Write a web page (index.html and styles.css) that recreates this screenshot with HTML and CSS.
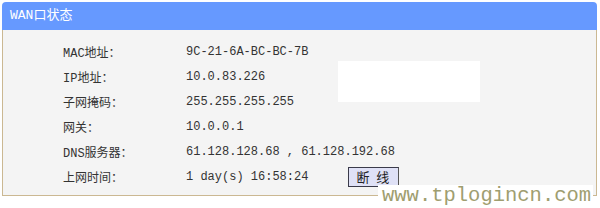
FILE: index.html
```html
<!DOCTYPE html>
<html>
<head>
<meta charset="utf-8">
<link rel="stylesheet" href="styles.css">
</head>
<body>
<div class="panel">
  <div class="panel-head">WAN口状态</div>
  <div class="panel-body">
    <div class="rows">
      <div class="label">MAC地址：</div><div class="value">9C-21-6A-BC-BC-7B</div>
      <div class="label">IP地址：</div><div class="value">10.0.83.226</div>
      <div class="label">子网掩码：</div><div class="value">255.255.255.255</div>
      <div class="label">网关：</div><div class="value">10.0.0.1</div>
      <div class="label">DNS服务器：</div><div class="value">61.128.128.68 , 61.128.192.68</div>
      <div class="label">上网时间：</div><div class="value">1 day(s) 16:58:24<button class="btn">断 线</button></div>
    </div>
    <div class="redact"></div>
  </div>
</div>
<div class="watermark">www.tplogincn.com</div>
</body>
</html>
```
FILE: styles.css
```css
html, body {
  margin: 0;
  padding: 0;
  background: #ffffff;
  width: 600px;
  height: 208px;
  overflow: hidden;
}
body {
  position: relative;
  font-family: "Liberation Mono", "Noto Sans CJK SC", monospace;
  font-size: 12px;
  color: #333333;
}
.panel {
  margin: 2px 3px 0 2px;
}
.panel-head {
  height: 28px;
  line-height: 28px;
  background: #6699ff;
  border-radius: 4px 4px 0 0;
  color: #ffffff;
  font-size: 13px;
  padding-left: 8px;
  font-family: "Liberation Mono", "Noto Sans CJK SC", monospace;
}
.panel-body {
  position: relative;
  height: 166px;
  background: #f4f4f4;
  border: 1px solid #cbb892;
  border-top: none;
  box-sizing: border-box;
  padding: 9px 0 0 60px;
}
.rows {
  display: grid;
  grid-template-columns: 123px auto;
  grid-auto-rows: 25px;
  align-items: center;
}
.value {
  display: flex;
  align-items: center;
}
.btn {
  margin-left: 40px;
  width: 51px;
  height: 20px;
  padding: 0;
  background: #dfe1f6;
  border: 1px solid #3a3a4a;
  border-right-color: #555;
  color: #222;
  font-family: "Noto Sans CJK SC", sans-serif;
  font-size: 13px;
  letter-spacing: 2px;
  line-height: 18px;
}
.redact {
  position: absolute;
  left: 335px;
  top: 31px;
  width: 142px;
  height: 41px;
  background: #ffffff;
}
.watermark {
  position: absolute;
  left: 378px;
  top: 185px;
  width: 215px;
  height: 23px;
  background: #ffffff;
  color: #9f9e70;
  font-family: "Liberation Mono", monospace;
  font-size: 20.5px;
  line-height: 22px;
  padding-left: 4px;
  box-sizing: border-box;
}
```
